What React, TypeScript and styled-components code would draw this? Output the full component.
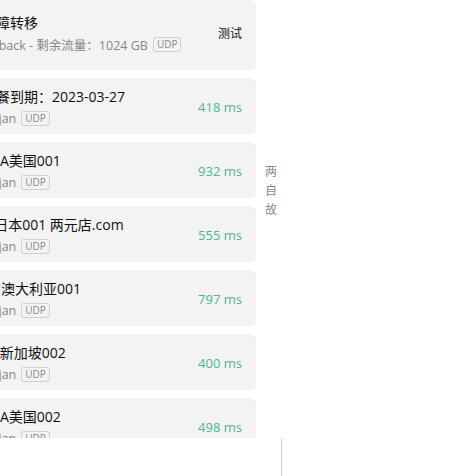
import React from "react";
import styled, { createGlobalStyle } from "styled-components";

const Global = createGlobalStyle`
  html, body { margin: 0; padding: 0; background: #ffffff; }
  body { font-family: "Open Sans", "Noto Sans CJK SC", sans-serif; }
  #root { width: 464px; height: 476px; overflow: hidden; }
`;

const Page = styled.div`
  display: flex;
  flex-direction: column;
  width: 464px;
  height: 476px;
`;

const Main = styled.div`
  display: flex;
  height: 438px;
  overflow: hidden;
`;

const List = styled.div`
  display: flex;
  flex-direction: column;
  gap: 8px;
  width: 288px;
  margin-left: -32px;
  flex-shrink: 0;
`;

const Card = styled.div<{ $group?: boolean }>`
  display: flex;
  align-items: center;
  justify-content: space-between;
  flex-shrink: 0;
  background: #f3f3f3;
  border-radius: 5px;
  padding: ${(p) => (p.$group ? "12px 14px 16px" : "8px 14px 6px")};
`;

const Info = styled.div`
  display: flex;
  flex-direction: column;
  min-width: 0;
`;

const Name = styled.div`
  font-size: 14px;
  line-height: 22px;
  color: #111111;
  white-space: nowrap;
`;

const Sub = styled.div`
  display: flex;
  align-items: center;
  height: 20px;
  margin-left: -3px;
  font-size: 12.5px;
  color: #868686;
  white-space: nowrap;
`;

const Badge = styled.span`
  display: inline-flex;
  align-items: center;
  height: 13px;
  padding: 0 3px;
  margin-left: 5px;
  border: 1px solid #cfcfcf;
  border-radius: 3px;
  font-size: 10px;
  line-height: 13px;
  color: #8a8a8a;
`;

const Delay = styled.span`
  font-size: 13px;
  color: #4cb98a;
  white-space: nowrap;
`;

const TestBtn = styled.span`
  font-size: 12px;
  color: #111;
`;

const Index = styled.div`
  display: flex;
  flex-direction: column;
  align-items: center;
  width: 30px;
  padding-top: 162px;
  flex-shrink: 0;
`;

const IndexItem = styled.span`
  font-size: 12px;
  line-height: 19px;
  color: #8a8a8a;
`;

const Bottom = styled.div`
  display: flex;
  flex: 1;
  padding-top: 1px;
`;

const Divider = styled.div`
  width: 1px;
  margin-left: 281px;
  background: #c9cbd6;
`;

const proxies = [
  { name: "套餐到期：2023-03-27", delay: 418 },
  { name: "USA美国001", delay: 932 },
  { name: "JP日本001 两元店.com", delay: 555 },
  { name: "AU澳大利亚001", delay: 797 },
  { name: "SG新加坡002", delay: 400 },
  { name: "USA美国002", delay: 498 },
];

export default function App() {
  return (
    <Page>
      <Global />
      <Main>
        <List>
          <Card $group>
            <Info>
              <Name>故障转移</Name>
              <Sub>
                Fallback - 剩余流量：1024 GB<Badge>UDP</Badge>
              </Sub>
            </Info>
            <TestBtn>测试</TestBtn>
          </Card>
          {proxies.map((p) => (
            <Card key={p.name}>
              <Info>
                <Name>{p.name}</Name>
                <Sub>
                  Trojan<Badge>UDP</Badge>
                </Sub>
              </Info>
              <Delay>{p.delay} ms</Delay>
            </Card>
          ))}
        </List>
        <Index>
          <IndexItem>两</IndexItem>
          <IndexItem>自</IndexItem>
          <IndexItem>故</IndexItem>
        </Index>
      </Main>
      <Bottom>
        <Divider />
      </Bottom>
    </Page>
  );
}
